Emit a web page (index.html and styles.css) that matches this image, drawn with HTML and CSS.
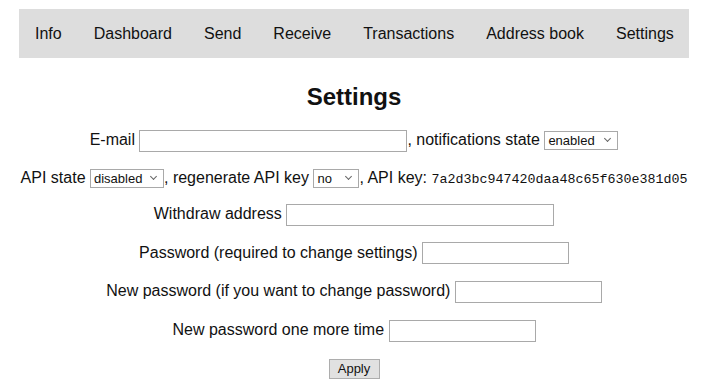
FILE: index.html
```html
<!DOCTYPE html>
<html lang="en">
<head>
  <meta charset="UTF-8" />
  <title>Settings</title>
  <link rel="stylesheet" href="styles.css">
</head>
<body>

  <div class="page">
    <ul class="menu">
      <li><a href="#">Info</a></li>
      <li><a href="#">Dashboard</a></li>
      <li><a href="#">Send</a></li>
      <li><a href="#">Receive</a></li>
      <li><a href="#">Transactions</a></li>
      <li><a href="#">Address book</a></li>
      <li><a href="#">Settings</a></li>
    </ul>

    <h2 class="title">Settings</h2>

    <form class="settings">
      <p>E-mail <input type="text" class="wide">, notifications state
        <span class="select"><select><option>enabled</option><option>disabled</option></select></span>
      </p>
      <p class="api">API state
        <span class="select"><select><option>disabled</option><option>enabled</option></select></span>, regenerate API key
        <span class="select"><select class="short"><option>no</option><option>yes</option></select></span>, API key: <code class="key">7a2d3bc947420daa48c65f630e381d05</code>
      </p>
      <p>Withdraw address <input type="text" class="wide"></p>
      <p>Password (required to change settings) <input type="password"></p>
      <p>New password (if you want to change password) <input type="password"></p>
      <p>New password one more time <input type="password"></p>
      <p class="actions"><button type="button">Apply</button></p>
    </form>
  </div>

</body>
</html>
```

FILE: styles.css
```css
body {
  margin: 0;
  font-family: "Liberation Sans", Arial, sans-serif;
  font-size: 16px;
  color: #111;
  background: #fff;
}
.page {
  width: 670px;
  margin: 9px 0 0 19px;
}
.menu {
  display: flex;
  list-style: none;
  margin: 0;
  padding: 0;
  background-color: #dddddd;
}
.menu li {
  flex-shrink: 0;
  white-space: nowrap;
}
.menu a {
  display: block;
  padding: 15px 16px;
  line-height: 19px;
  color: #111;
  text-decoration: none;
}
.title {
  font-size: 24px;
  line-height: 28px;
  text-align: center;
  margin: 25px 0 18px;
}
.settings {
  text-align: center;
}
.settings p {
  margin: 0 0 16px;
  line-height: 22px;
}
.settings p.api {
  line-height: 20px;
  margin-bottom: 13px;
}
.settings input {
  box-sizing: border-box;
  height: 22px;
  width: 147px;
  padding: 1px 2px;
  border: 1px solid #a9a9a9;
  font-family: "Liberation Sans", Arial, sans-serif;
  font-size: 13px;
  vertical-align: middle;
  margin: 0;
}
.settings input.wide {
  width: 268px;
}
.select {
  position: relative;
  display: inline-block;
  vertical-align: middle;
  line-height: 0;
}
.select select {
  -webkit-appearance: none;
  appearance: none;
  box-sizing: border-box;
  width: 74px;
  height: 19px;
  padding: 0 0 0 3px;
  border: 1px solid #a9a9a9;
  border-radius: 0;
  background: #fff;
  font-family: "Liberation Sans", Arial, sans-serif;
  font-size: 13px;
  color: #111;
  margin: 0;
}
.select select.short {
  width: 46px;
}
.select::after {
  content: "";
  position: absolute;
  right: 8px;
  top: 5px;
  width: 4px;
  height: 4px;
  border-right: 1.5px solid #666;
  border-bottom: 1.5px solid #666;
  transform: rotate(45deg);
  pointer-events: none;
}
.key {
  font-family: "Liberation Mono", "Courier New", monospace;
  font-size: 13.33px;
}
.settings p.actions {
  line-height: 20px;
}
.actions button {
  box-sizing: border-box;
  width: 51px;
  height: 20px;
  padding: 0;
  border: 1px solid #adadad;
  border-radius: 0;
  background: #e1e1e1;
  font-family: "Liberation Sans", Arial, sans-serif;
  font-size: 13px;
  color: #111;
  vertical-align: middle;
}
```
